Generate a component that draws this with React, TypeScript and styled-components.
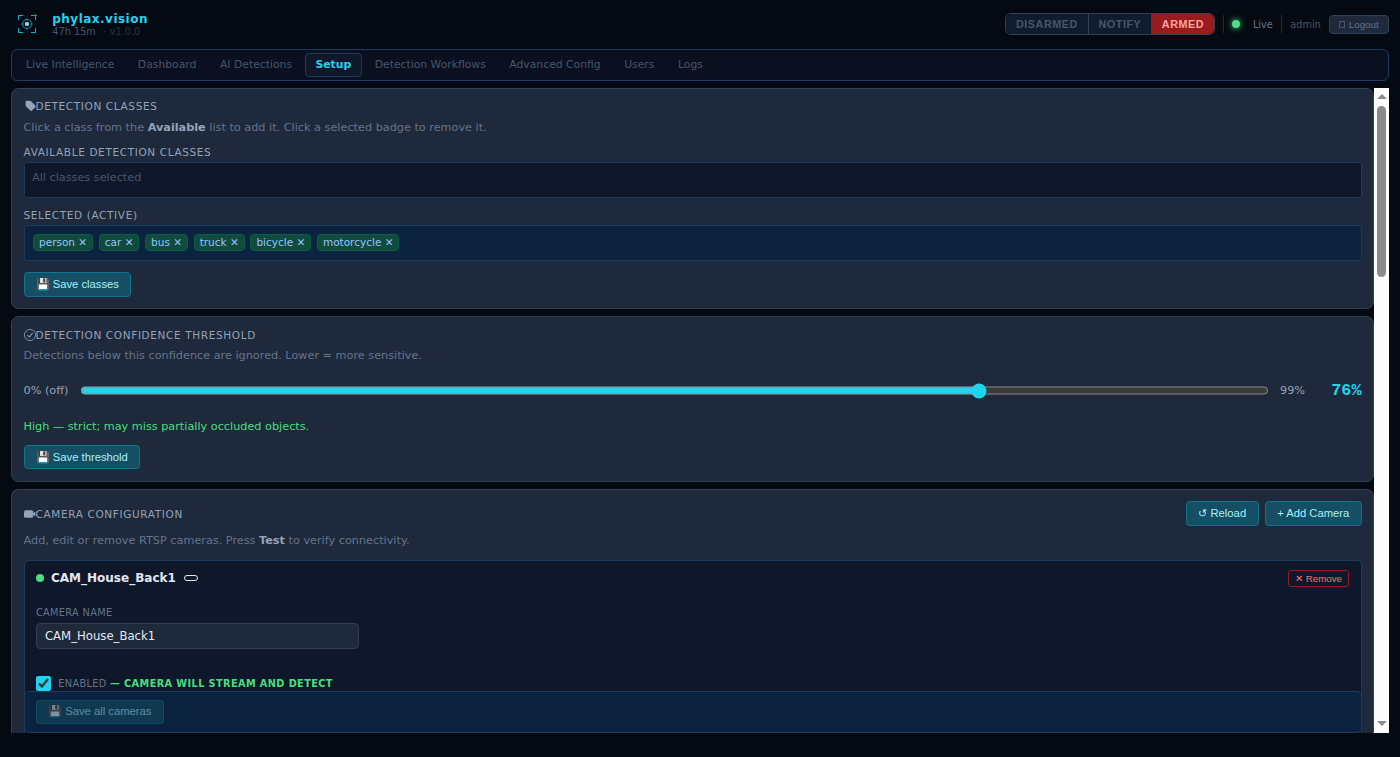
import React from "react";
import styled, { createGlobalStyle, css } from "styled-components";

const sans = `"DejaVu Sans", sans-serif`;
const arial = `"Liberation Sans", Arial, sans-serif`;

const GlobalStyle = createGlobalStyle`
  *, *::before, *::after { box-sizing: border-box; }
  html { font-size: 15px; }
  body { margin: 0; background: #050a12; color: #e2e8f0; font-family: ${sans}; overflow: hidden; }
  button, input { margin: 0; }
`;

const Page = styled.div`
  height: 757px;
  padding: 11px 11px 24px;
  display: flex;
  flex-direction: column;
`;

const Header = styled.header`
  height: 26px;
  display: flex;
  align-items: center;
  justify-content: space-between;
`;

const Brand = styled.div`
  display: flex;
  align-items: center;
  gap: 9.25px;
`;

const BrandText = styled.div`
  display: flex;
  flex-direction: column;
`;

const BrandName = styled.div`
  font-size: 12px;
  line-height: 14px;
  font-weight: 700;
  letter-spacing: 0.48px;
  color: #22d3ee;
`;

const BrandMeta = styled.div`
  font-size: 9.75px;
  line-height: 11px;
  color: #475569;
  span { color: #263143; margin-left: 4.5px; }
`;

const Status = styled.div`
  display: flex;
  align-items: center;
`;

const ModeGroup = styled.div`
  display: flex;
  height: 22px;
  border: 1px solid #334155;
  border-radius: 6px;
  overflow: hidden;
`;

const ModeButton = styled.button<{ $active?: boolean }>`
  border: 0;
  border-left: 1px solid #334155;
  padding: 0 9.75px;
  background: ${(p) => (p.$active ? "#991b1b" : "#0f1c30")};
  color: ${(p) => (p.$active ? "#fca5a5" : "#475569")};
  font: 700 10.8px ${arial};
  letter-spacing: 0.55px;
  &:first-child { border-left: 0; }
`;

const Divider = styled.div<{ $left: number; $right: number }>`
  width: 1px;
  height: 18px;
  background: #1e293b;
  margin-left: ${(p) => p.$left}px;
  margin-right: ${(p) => p.$right}px;
`;

const Dot = styled.span<{ $glow?: boolean }>`
  width: 8px;
  height: 8px;
  flex: none;
  border-radius: 50%;
  background: #4ade80;
  ${(p) => p.$glow && css`box-shadow: 0 0 6px #4ade80;`}
`;

const StatusText = styled.span<{ $dim?: boolean }>`
  font-size: 9.75px;
  color: ${(p) => (p.$dim ? "#475569" : "#64748b")};
`;

const LiveText = styled(StatusText)`
  margin-left: 13px;
`;

const Logout = styled.button`
  width: 60px;
  height: 19px;
  padding: 0;
  margin-left: 8.2px;
  border: 1px solid #334155;
  border-radius: 4px;
  background: #1e293b;
  color: #64748b;
  font: 9.75px ${arial};
  display: flex;
  align-items: center;
  justify-content: center;
  gap: 3.5px;
`;

const MissingGlyph = styled.span`
  width: 6px;
  height: 7px;
  border: 1px solid #475569;
`;

const Nav = styled.nav`
  display: flex;
  align-items: center;
  gap: 2px;
  height: 32px;
  flex: none;
  margin-top: 12px;
  padding: 0 3.3px;
  background: #0a101f;
  border: 1px solid #1e3a5f;
  border-radius: 6px;
`;

const NavItem = styled.a<{ $active?: boolean }>`
  height: 24px;
  padding: 0 9.75px;
  border: 1px solid ${(p) => (p.$active ? "#1e3a5f" : "transparent")};
  border-radius: 4px;
  background: ${(p) => (p.$active ? "#0f172a" : "transparent")};
  color: ${(p) => (p.$active ? "#22d3ee" : "#475569")};
  font-size: 10.8px;
  font-weight: ${(p) => (p.$active ? 700 : 400)};
  line-height: 21px;
  white-space: nowrap;
`;

const Body = styled.div`
  flex: 1;
  min-height: 0;
  margin-top: 7px;
  display: flex;
`;

const Content = styled.main`
  flex: 1;
  min-width: 0;
  overflow: hidden;
  display: flex;
  flex-direction: column;
  gap: 7px;
`;

const Card = styled.section<{ $height: number; $top?: number }>`
  flex: none;
  height: ${(p) => p.$height}px;
  padding: ${(p) => p.$top ?? 11}px 11.5px 11px;
  border: 1px solid #334155;
  border-radius: 7.5px;
  background: #1e293b;
`;

const OpenCard = styled(Card)`
  border-bottom: 0;
  border-radius: 7.5px 7.5px 0 0;
  padding-bottom: 0;
  display: flex;
  flex-direction: column;
`;

const CardTitle = styled.h2`
  display: flex;
  align-items: center;
  height: 13px;
  margin: 0;
  font-size: 10.5px;
  font-weight: 400;
  letter-spacing: 0.63px;
  color: #94a3b8;
  white-space: nowrap;
  svg { display: block; flex: none; }
`;

const Hint = styled.p<{ $top: number }>`
  margin: ${(p) => p.$top}px 0 0;
  font-size: 11.25px;
  line-height: 14px;
  color: #64748b;
  b { color: #94a3b8; }
`;

const FieldTitle = styled.div<{ $top: number }>`
  margin-top: ${(p) => p.$top}px;
  font-size: 10.5px;
  line-height: 14px;
  letter-spacing: 0.63px;
  color: #94a3b8;
`;

const TagBox = styled.div<{ $selected?: boolean }>`
  display: flex;
  align-items: flex-start;
  gap: 5.65px;
  height: 36px;
  margin-top: 3px;
  padding: 8px 8.5px;
  border: 1px solid #1e3a5f;
  border-radius: 3px;
  background: ${(p) => (p.$selected ? "#0c2340" : "#0f172a")};
`;

const Placeholder = styled.span`
  margin: -1px 0 0 -1px;
  font-size: 11.25px;
  line-height: 15px;
  color: #475569;
`;

const Tag = styled.span`
  height: 17px;
  padding: 0 5px;
  border: 1px solid #065f46;
  border-radius: 3.75px;
  background: #104b3d;
  color: #93c5fd;
  font-size: 10.5px;
  line-height: 15px;
  white-space: nowrap;
`;

const Button = styled.button<{ $width: number; $top?: number; $height?: number; $lift?: number; $disabled?: boolean }>`
  display: block;
  width: ${(p) => p.$width}px;
  height: ${(p) => p.$height ?? 25}px;
  margin-top: ${(p) => p.$top ?? 0}px;
  padding: 0 0 ${(p) => p.$lift ?? 0}px 0.5px;
  border: 1px solid #0e7490;
  border-radius: 3.75px;
  background: #164e63;
  color: #a5f3fc;
  font: 11.25px ${arial};
  white-space: nowrap;
  opacity: ${(p) => (p.$disabled ? 0.5 : 1)};
`;

const SliderRow = styled.div`
  display: flex;
  align-items: center;
  height: 20px;
  margin-top: 17px;
  font-size: 11.25px;
  color: #94a3b8;
`;

const Range = styled.input`
  flex: 1;
  min-width: 0;
  height: 17px;
  margin: 1px 11.25px 0 12px !important;
  accent-color: #22d3ee;
`;

const Percent = styled.span`
  width: 56.5px;
  text-align: right;
  color: #22d3ee;
  font: 700 16.8px "Liberation Mono", monospace;
`;

const Verdict = styled.div`
  margin-top: 20px;
  font-size: 11.25px;
  line-height: 14px;
  color: #4ade80;
`;

const CameraHead = styled.div`
  display: flex;
  align-items: center;
  justify-content: space-between;
`;

const Actions = styled.div`
  display: flex;
  gap: 6px;
`;

const CameraPanel = styled.div`
  display: flex;
  flex-direction: column;
  flex: 1;
  margin-top: 12px;
  border: 1px solid #1e3a5f;
  border-bottom: 0;
  border-radius: 5px 5px 0 0;
  background: #0f172a;
`;

const CameraBody = styled.div`
  flex: 1;
  padding: 9px 12px 0 11.4px;
`;

const CameraTitle = styled.div`
  display: flex;
  align-items: center;
  height: 17px;
  padding-bottom: 1px;
  font-size: 12px;
  font-weight: 700;
  > ${Dot} { margin-right: 7.1px; }
`;

const EmptyBadge = styled.span`
  width: 14px;
  height: 6px;
  margin-left: 8.2px;
  border: 1px solid #e2e8f0;
  border-radius: 3px;
`;

const Remove = styled.button`
  flex: none;
  align-self: flex-start;
  width: 61px;
  height: 17px;
  margin-left: auto;
  padding: 0 0 0 1px;
  border: 1px solid #991b1b;
  border-radius: 3px;
  background: transparent;
  color: #f87171;
  font: 9.75px ${arial};
  white-space: nowrap;
`;

const Label = styled.label`
  display: block;
  margin-top: 19px;
  font-size: 9.75px;
  line-height: 13px;
  letter-spacing: 0.35px;
  color: #64748b;
`;

const TextInput = styled.input`
  display: block;
  width: 323px;
  height: 26px;
  margin-top: 4px;
  padding: 0 8px;
  border: 1px solid #334155;
  border-radius: 4.5px;
  background: #1e293b;
  color: #e2e8f0;
  font: 11.7px ${sans};
`;

const CheckRow = styled.label`
  display: flex;
  align-items: center;
  height: 15px;
  margin-top: 27px;
  font-size: 9.75px;
  letter-spacing: 0.35px;
  color: #64748b;
  white-space: pre;
  b { color: #4ade80; letter-spacing: 0.4px; }
`;

const Checkbox = styled.input`
  width: 15px;
  height: 15px;
  margin: 0 7.4px 0 0 !important;
  accent-color: #22d3ee;
`;

const SaveBar = styled.div`
  height: 42px;
  margin: 0 -1px;
  padding: 8px 11px;
  border: 1px solid #1e3a5f;
  border-radius: 5px;
  background: #0c2340;
`;

const Scrollbar = styled.div`
  width: 15px;
  display: flex;
  flex-direction: column;
  align-items: center;
  justify-content: space-between;
  background: #fcfcfc;
`;

const ScrollTop = styled.div`
  display: flex;
  flex-direction: column;
  align-items: center;
`;

const Arrow = styled.span<{ $down?: boolean }>`
  border: 5px solid transparent;
  border-top-width: ${(p) => (p.$down ? 5 : 0)}px;
  border-bottom-width: ${(p) => (p.$down ? 0 : 5)}px;
  border-top-color: ${(p) => (p.$down ? "#8b8b8b" : "transparent")};
  border-bottom-color: ${(p) => (p.$down ? "transparent" : "#8b8b8b")};
  margin: ${(p) => (p.$down ? "0 0 7px" : "6px 0 0")};
`;

const Thumb = styled.div`
  width: 9px;
  height: 171px;
  margin-top: 7px;
  border-radius: 5px;
  background: #8b8b8b;
`;

const Logo = () => (
  <svg width="32" height="32" viewBox="0 0 32 32" fill="none">
    <g stroke="#06b6d4">
      <path d="M7.5 12V7.5H12M20 7.5h4.5V12M7.5 20v4.5H12M24.5 20v4.5H20" />
      <path d="M10 16h2M20 16h2M16 10v2M16 20v2" strokeWidth="2" strokeOpacity=".35" />
      <circle cx="16" cy="16" r="4.4" strokeWidth="1.3" strokeOpacity=".65" />
    </g>
    <circle cx="16" cy="16" r="2.2" fill="#9fc9d3" />
    <path d="M24.5 6v3M23 7.5h3" stroke="#4d8a3c" />
  </svg>
);

const TagIcon = () => (
  <svg width="12" height="12" viewBox="0 0 12 12" fill="#94a3b8">
    <path d="M2.6.8h3.6q.5 0 .9.4l4.4 4.5q.6.6 0 1.2l-3.7 3.8q-.6.6-1.2 0L2 6.4q-.4-.4-.4-.9V1.8q0-1 1-1z" />
  </svg>
);

const CheckIcon = () => (
  <svg width="12" height="12" viewBox="0 0 12 12" fill="none" stroke="#94a3b8">
    <circle cx="6" cy="6" r="5.6" strokeWidth=".8" />
    <path d="M3.4 6.1l2 1.9 3.2-4" strokeWidth="1.1" />
  </svg>
);

const VideoIcon = () => (
  <svg width="12" height="12" viewBox="0 0 12 12" fill="#94a3b8">
    <rect y="2.2" width="9.2" height="7.6" rx="1.5" />
    <path d="M9 5.2L11.4 3.6v4.8L9 6.8z" />
  </svg>
);

const tabs = ["Live Intelligence", "Dashboard", "AI Detections", "Setup", "Detection Workflows", "Advanced Config", "Users", "Logs"];
const classes = ["person", "car", "bus", "truck", "bicycle", "motorcycle"];

export default function App() {
  return (
    <>
      <GlobalStyle />
      <Page>
        <Header>
          <Brand>
            <Logo />
            <BrandText>
              <BrandName>phylax.vision</BrandName>
              <BrandMeta>47h 15m <span>· v1.0.0</span></BrandMeta>
            </BrandText>
          </Brand>
          <Status>
            <ModeGroup>
              <ModeButton>DISARMED</ModeButton>
              <ModeButton>NOTIFY</ModeButton>
              <ModeButton $active>ARMED</ModeButton>
            </ModeGroup>
            <Divider $left={8} $right={8} />
            <Dot $glow />
            <LiveText>Live</LiveText>
            <Divider $left={8.4} $right={8} />
            <StatusText $dim>admin</StatusText>
            <Logout><MissingGlyph />Logout</Logout>
          </Status>
        </Header>
        <Nav>
          {tabs.map((tab) => <NavItem key={tab} $active={tab === "Setup"}>{tab}</NavItem>)}
        </Nav>
        <Body>
          <Content>
            <Card $height={221} $top={10}>
              <CardTitle><TagIcon />DETECTION CLASSES</CardTitle>
              <Hint $top={9}>Click a class from the <b>Available</b> list to add it. Click a selected badge to remove it.</Hint>
              <FieldTitle $top={10}>AVAILABLE DETECTION CLASSES</FieldTitle>
              <TagBox><Placeholder>All classes selected</Placeholder></TagBox>
              <FieldTitle $top={10}>SELECTED (ACTIVE)</FieldTitle>
              <TagBox $selected>{classes.map((name) => <Tag key={name}>{name} ✕</Tag>)}</TagBox>
              <Button $width={107} $top={11}>💾 Save classes</Button>
            </Card>
            <Card $height={166}>
              <CardTitle><CheckIcon />DETECTION CONFIDENCE THRESHOLD</CardTitle>
              <Hint $top={8}>Detections below this confidence are ignored. Lower = more sensitive.</Hint>
              <SliderRow>
                <span>0% (off)</span>
                <Range type="range" min={0} max={100} defaultValue={76} />
                <span>99%</span>
                <Percent>76%</Percent>
              </SliderRow>
              <Verdict>High — strict; may miss partially occluded objects.</Verdict>
              <Button $width={116} $height={24} $top={11}>💾 Save threshold</Button>
            </Card>
            <OpenCard $height={244}>
              <CameraHead>
                <CardTitle><VideoIcon />CAMERA CONFIGURATION</CardTitle>
                <Actions>
                  <Button $width={73}>↺ Reload</Button>
                  <Button $width={97} $lift={2}>+ Add Camera</Button>
                </Actions>
              </CameraHead>
              <Hint $top={8}>Add, edit or remove RTSP cameras. Press <b>Test</b> to verify connectivity.</Hint>
              <CameraPanel>
                <CameraBody>
                  <CameraTitle>
                    <Dot />CAM_House_Back1<EmptyBadge />
                    <Remove>✕ Remove</Remove>
                  </CameraTitle>
                  <Label>CAMERA NAME</Label>
                  <TextInput defaultValue="CAM_House_Back1" />
                  <CheckRow>
                    <Checkbox type="checkbox" defaultChecked />ENABLED <b>— CAMERA WILL STREAM AND DETECT</b>
                  </CheckRow>
                </CameraBody>
                <SaveBar><Button $width={128} $height={24} $lift={2} $disabled>💾 Save all cameras</Button></SaveBar>
              </CameraPanel>
            </OpenCard>
          </Content>
          <Scrollbar>
            <ScrollTop><Arrow /><Thumb /></ScrollTop>
            <Arrow $down />
          </Scrollbar>
        </Body>
      </Page>
    </>
  );
}
